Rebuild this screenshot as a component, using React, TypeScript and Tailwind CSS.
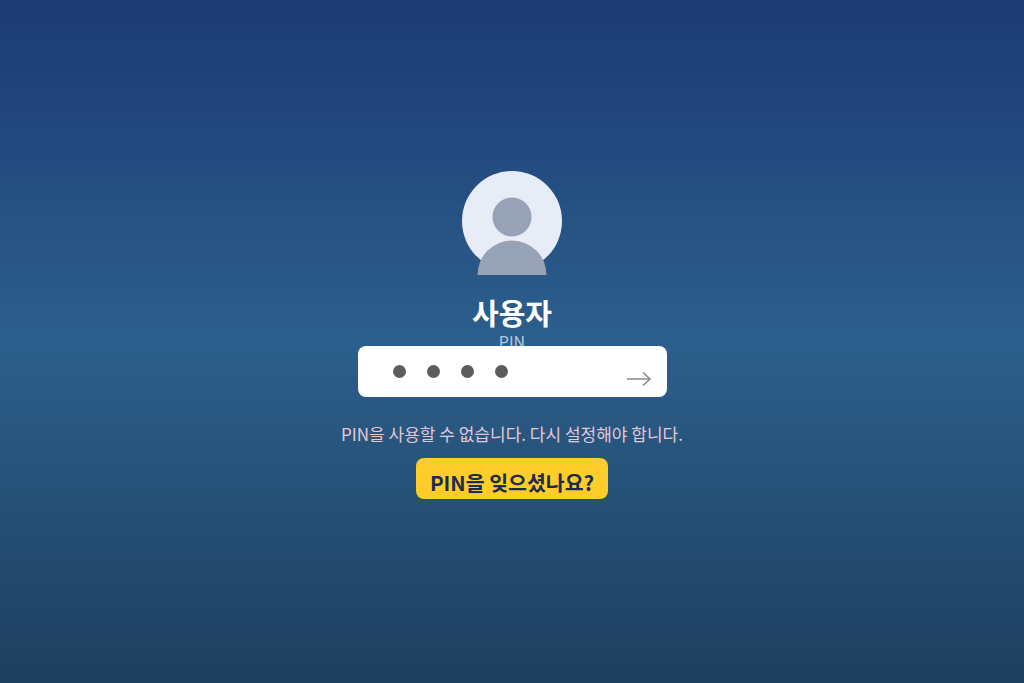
import React from 'react'

const font = { fontFamily: "'Noto Sans CJK KR', 'Noto Sans', sans-serif" }

export default function App() {
  return (
    <div
      className="h-[683px] w-[1024px] overflow-hidden bg-[linear-gradient(180deg,#1c3a75_0%,#2c5f8c_50%,#1e3f5e_100%)] flex flex-col items-center pt-[171px]"
      style={font}
    >
      {/* avatar */}
      <div className="relative w-[100px] h-[100px] rounded-full bg-[#e8ecf6]">
        <svg className="absolute left-0 top-0 overflow-visible" width="100" height="104" viewBox="0 0 100 104">
          <circle cx="50" cy="46" r="19.5" fill="#98a2b7" />
          <path d="M15.5 104 A34.5 34.5 0 0 1 84.5 104 Z" fill="#98a2b7" />
        </svg>
      </div>

      <h1 className="mt-[24px] mb-[4px] h-[34px] text-[29px] leading-[34px] font-semibold text-white">사용자</h1>
      <div className="relative h-[13px] text-[16px] leading-[16px] text-[#b4c8dd]">PIN</div>

      {/* pin box */}
      <div className="relative w-[309px] h-[51px] rounded-lg bg-white flex items-start gap-[21px] pl-[35px] pt-[19px]">
        <span className="w-[13px] h-[13px] rounded-full bg-[#5c5c5c]" />
        <span className="w-[13px] h-[13px] rounded-full bg-[#5c5c5c]" />
        <span className="w-[13px] h-[13px] rounded-full bg-[#5c5c5c]" />
        <span className="w-[13px] h-[13px] rounded-full bg-[#5c5c5c]" />
        <svg className="absolute left-[268px] top-[25px]" width="26" height="16" viewBox="0 0 26 16" fill="none" stroke="#808080" strokeWidth="1.4">
          <path d="M1 8 H24" />
          <path d="M17 1.5 L24 8 L17 14.5" />
        </svg>
      </div>

      <p className="mt-[24px] h-[26px] text-[17px] leading-[26px] text-[#e3c8d6]">
        PIN을 사용할 수 없습니다. 다시 설정해야 합니다.
      </p>

      <button className="mt-[11px] h-[41px] w-[192px] rounded-lg bg-[#ffcd29] pt-[8px] text-[20.5px] leading-[33px] font-bold text-[#1c2c4e]">
        PIN을 잊으셨나요?
      </button>
    </div>
  )
}
